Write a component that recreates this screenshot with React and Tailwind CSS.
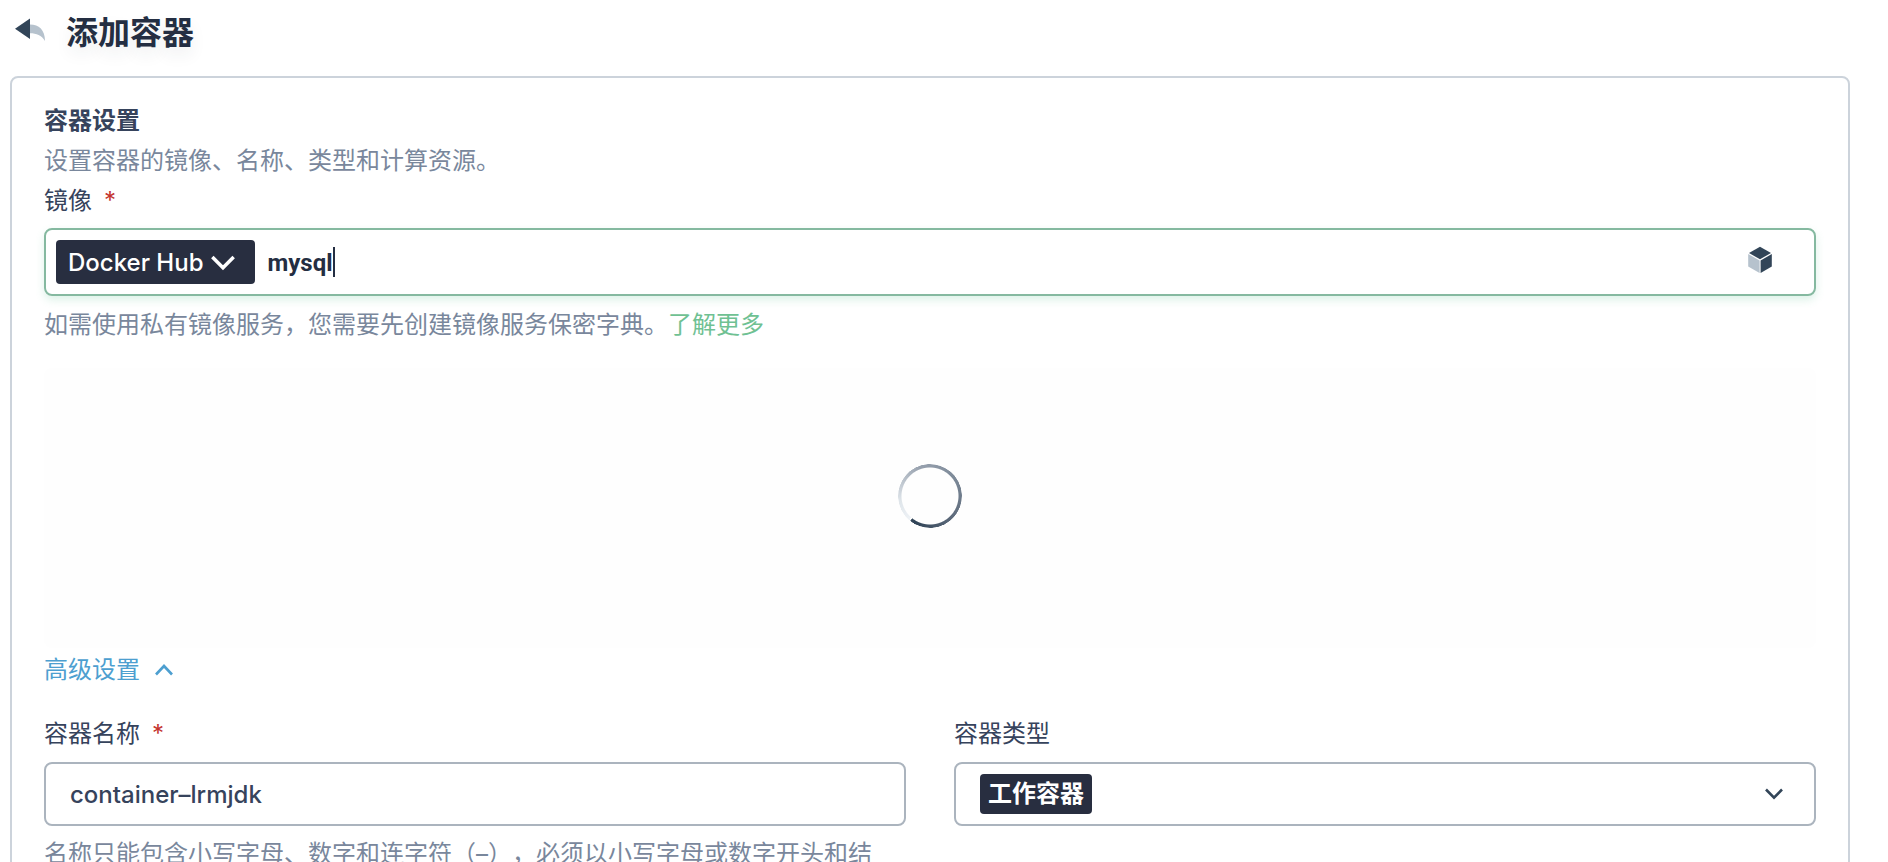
import React, { useState } from "react";

function BackIcon() {
  return (
    <svg width="32" height="24" viewBox="0 0 32 24" aria-hidden="true">
      <path d="M16 6.6C25 6.6 31 12 31 23C27.500 17 22.500 15.200 16 15.200Z" fill="#b6c2cd" />
      <path d="M16 0.400V21L1 10.800Z" fill="#324558" />
    </svg>
  );
}

function CubeIcon() {
  return (
    <svg width="24" height="28" viewBox="0 0 24 28" aria-hidden="true">
      <path d="M12 0.800L23 7L12 13.300L1 7Z" fill="#324558" />
      <path d="M0.200 8L11.600 14.500V27L0.200 20.600Z" fill="#b6c2cd" />
      <path d="M23.800 8L12.600 14.500V27L23.800 20.600Z" fill="#324558" />
    </svg>
  );
}

function Chevron({ up = false, className = "h-3 w-[18px]" }) {
  return (
    <svg
      viewBox="0 0 18 12"
      fill="none"
      stroke="currentColor"
      strokeWidth="2.6"
      className={className}
      aria-hidden="true"
    >
      <path d={up ? "M1 10.500L9 2L17 10.500" : "M1 1.500L9 9.600L17 1.500"} />
    </svg>
  );
}

function Spinner() {
  return (
    <div
      role="status"
      aria-label="加载中"
      className="size-16 rotate-[221deg] rounded-full bg-[conic-gradient(#eef2f6_0deg,#dfe5ea_40deg,#97a1ae_120deg,#7a8796_200deg,#5f6c7d_270deg,#324558_345deg,#324558_357deg,transparent_358deg)] mask-[radial-gradient(circle_closest-side,transparent_28px,black_29px,black_32px,transparent_32px)]"
    />
  );
}

function Required() {
  return <span className="ml-3 text-[#c4352f]">*</span>;
}

export default function App() {
  const [image, setImage] = useState("mysql");
  const [name, setName] = useState("container–lrmjdk");

  return (
    <main
      lang="zh-CN"
      className="h-screen overflow-hidden bg-white pr-[38px] pl-[10px] font-['Inter','Noto_Sans_CJK_SC',sans-serif] text-2xl leading-10 text-[#36435c] [text-spacing-trim:space-all]"
    >
      <header className="flex h-[76px] items-start gap-5 pt-[13px] pl-1">
        <button type="button" aria-label="返回" className="pt-[5px]">
          <BackIcon />
        </button>
        <h1 className="text-[32px] leading-10 font-bold text-[#242e42] [text-shadow:0_8px_16px_rgba(36,46,66,0.08)]">
          添加容器
        </h1>
      </header>

      <form className="rounded-lg border-2 border-[#ccd3db] px-8 pt-[23px] pb-8">
        <h2 className="font-bold">容器设置</h2>
        <p className="text-[#79879c]">设置容器的镜像、名称、类型和计算资源。</p>
        <label htmlFor="image" className="block">
          镜像
          <Required />
        </label>

        <div className="mt-[7px] flex h-[68px] items-center rounded-lg border-2 border-[#85b9a0] pr-[42px] pl-[10px] shadow-[0_4px_8px_rgba(85,188,138,0.2)]">
          <button
            type="button"
            className="flex h-11 items-center gap-2 rounded bg-[#282e40] pt-[2px] pr-5 pl-3 font-medium text-white"
          >
            Docker Hub
            <Chevron className="h-4 w-6 shrink-0" />
          </button>
          <input
            id="image"
            value={image}
            onChange={(e) => setImage(e.target.value)}
            className="ml-3 field-sizing-content pt-[2px] font-['Roboto','Noto_Sans_CJK_SC',sans-serif] font-bold text-[#242e42] caret-transparent outline-none"
          />
          <span className="h-[30px] w-[2px] bg-[#242e42]" />
          <button type="button" aria-label="选择镜像" className="mb-1 ml-auto">
            <CubeIcon />
          </button>
        </div>

        <p className="mt-[9px] text-[#79879c]">
          如需使用私有镜像服务，您需要先创建镜像服务保密字典。
          <a href="#docs" className="text-[#6fc193]">
            了解更多
          </a>
        </p>

        <div className="mt-[23px] flex h-[280px] items-center justify-center rounded-lg bg-[#fefefe] pb-6">
          <Spinner />
        </div>

        <button type="button" aria-expanded="true" className="mt-[2px] flex items-center gap-[15px] text-[#4d9fd0]">
          高级设置
          <Chevron up />
        </button>

        <div className="mt-6 grid grid-cols-2 gap-12">
          <div>
            <label htmlFor="name" className="block">
              容器名称
              <Required />
            </label>
            <input
              id="name"
              value={name}
              onChange={(e) => setName(e.target.value)}
              className="mt-2 block h-16 w-full rounded-lg border-2 border-[#abb4be] px-6 font-medium outline-none"
            />
            <p className="mt-2 text-[#79879c]">
              名称只能包含小写字母、数字和连字符（–），必须以小写字母或数字开头和结
            </p>
          </div>
          <div>
            <label htmlFor="type" className="block">
              容器类型
            </label>
            <div className="mt-2 flex h-16 items-center justify-between rounded-lg border-2 border-[#abb4be] pr-[31px] pl-6">
              <select
                id="type"
                className="field-sizing-content h-10 appearance-none rounded bg-[#282e40] px-2 font-bold text-white outline-none"
              >
                <option>工作容器</option>
              </select>
              <Chevron className="h-3 w-[18px] text-[#324558]" />
            </div>
          </div>
        </div>
      </form>
    </main>
  );
}
